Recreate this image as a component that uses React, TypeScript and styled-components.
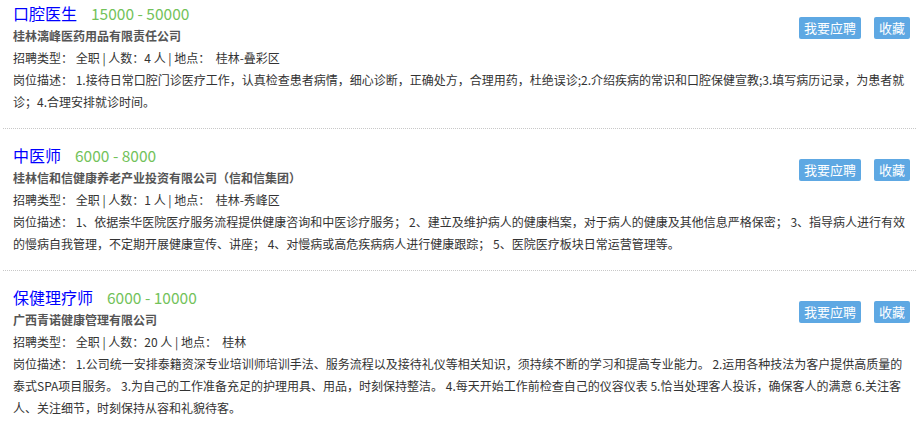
import React from "react";
import styled, { createGlobalStyle } from "styled-components";

const GlobalStyle = createGlobalStyle`
  body {
    margin: 0;
    background: #fff;
    font-family: "Noto Sans CJK SC", "Noto Sans", sans-serif;
    color: #333;
  }
`;

const JobList = styled.div`
  margin-left: 3px;
`;

const JobCard = styled.div`
  padding: 14px 6px 15px 10px;
  border-bottom: 1px dotted #c8c8c8;

  &:first-child {
    padding-top: 1px;
  }

  &:last-child {
    border-bottom: none;
  }
`;

const Header = styled.div`
  display: flex;
  justify-content: space-between;
  align-items: flex-start;
`;

const Info = styled.div`
  display: flex;
  flex-direction: column;
`;

const TitleRow = styled.div`
  display: flex;
  align-items: baseline;
  gap: 14px;
  height: 24px;
  line-height: 24px;
`;

const Title = styled.a`
  font-size: 16px;
  color: #0000ff;
  text-decoration: none;
  cursor: pointer;
`;

const Salary = styled.span`
  font-size: 15.5px;
  color: #72c25a;
`;

const Company = styled.div`
  font-size: 12px;
  font-weight: bold;
  color: #555;
  line-height: 22px;
`;

const Line = styled.div`
  font-size: 12px;
  line-height: 22px;
  color: #333;
`;

const Actions = styled.div`
  display: flex;
  gap: 13px;
  margin-top: 16px;
`;

const ActionButton = styled.button`
  height: 22px;
  padding: 0 5px;
  border: none;
  border-radius: 2px;
  background: #5ea8e3;
  color: #fff;
  font-family: inherit;
  font-size: 13px;
  line-height: 22px;
  cursor: pointer;
`;

type Job = {
  title: string;
  salary: string;
  company: string;
  count: string;
  place: string;
  desc: string;
};

const jobs: Job[] = [
  {
    title: "口腔医生",
    salary: "15000 - 50000",
    company: "桂林漓峰医药用品有限责任公司",
    count: "4",
    place: "桂林-叠彩区",
    desc: "1.接待日常口腔门诊医疗工作，认真检查患者病情，细心诊断，正确处方，合理用药，杜绝误诊;2.介绍疾病的常识和口腔保健宣教;3.填写病历记录，为患者就诊；4.合理安排就诊时间。",
  },
  {
    title: "中医师",
    salary: "6000 - 8000",
    company: "桂林信和信健康养老产业投资有限公司（信和信集团）",
    count: "1",
    place: "桂林-秀峰区",
    desc: "1、依据崇华医院医疗服务流程提供健康咨询和中医诊疗服务； 2、建立及维护病人的健康档案，对于病人的健康及其他信息严格保密； 3、指导病人进行有效的慢病自我管理，不定期开展健康宣传、讲座； 4、对慢病或高危疾病病人进行健康跟踪； 5、医院医疗板块日常运营管理等。",
  },
  {
    title: "保健理疗师",
    salary: "6000 - 10000",
    company: "广西青诺健康管理有限公司",
    count: "20",
    place: "桂林",
    desc: "1.公司统一安排泰籍资深专业培训师培训手法、服务流程以及接待礼仪等相关知识，须持续不断的学习和提高专业能力。 2.运用各种技法为客户提供高质量的泰式SPA项目服务。 3.为自己的工作准备充足的护理用具、用品，时刻保持整洁。 4.每天开始工作前检查自己的仪容仪表 5.恰当处理客人投诉，确保客人的满意 6.关注客人、关注细节，时刻保持从容和礼貌待客。",
  },
];

function App() {
  return (
    <>
      <GlobalStyle />
      <JobList>
        {jobs.map((job) => (
          <JobCard key={job.title}>
            <Header>
              <Info>
                <TitleRow>
                  <Title>{job.title}</Title>
                  <Salary>{job.salary}</Salary>
                </TitleRow>
                <Company>{job.company}</Company>
                <Line>
                  {`招聘类型： 全职 | 人数：${job.count} 人 | 地点：\u00a0 ${job.place}`}
                </Line>
              </Info>
              <Actions>
                <ActionButton>我要应聘</ActionButton>
                <ActionButton>收藏</ActionButton>
              </Actions>
            </Header>
            <Line>{`岗位描述： ${job.desc}`}</Line>
          </JobCard>
        ))}
      </JobList>
    </>
  );
}

export default App;
